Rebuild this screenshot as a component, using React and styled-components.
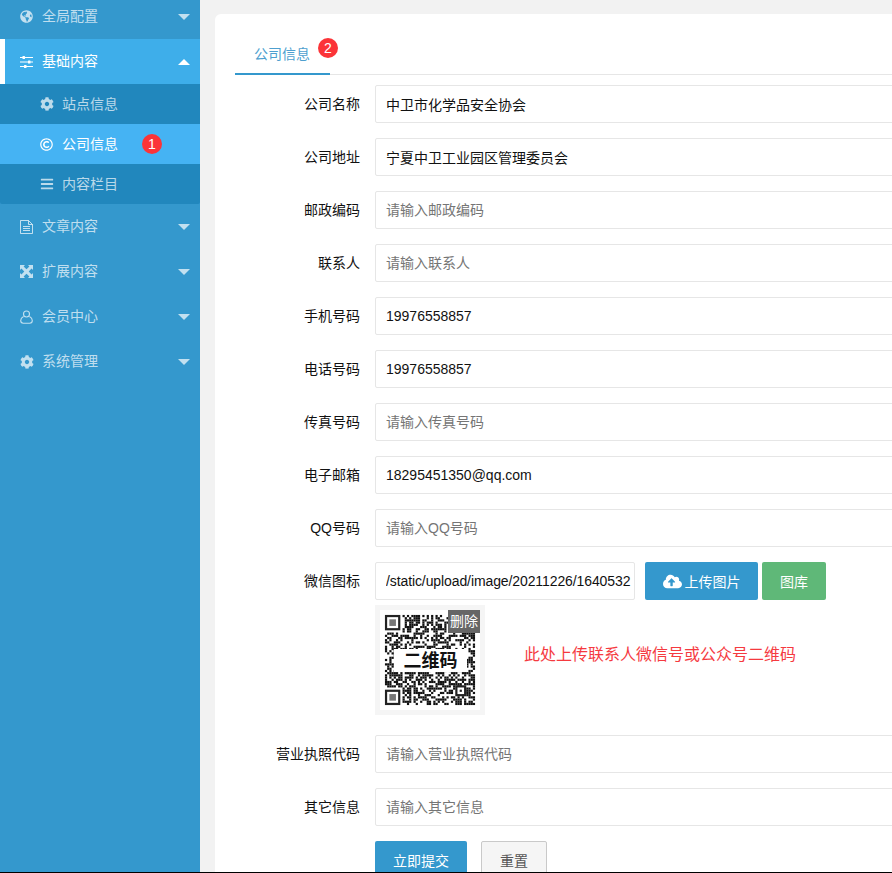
import React from 'react';
import styled, { createGlobalStyle } from 'styled-components';
import { FaGlobeAmericas, FaCog, FaRegCopyright, FaBars, FaCloudUploadAlt } from 'react-icons/fa';

const Global = createGlobalStyle`
  html, body { margin: 0; padding: 0; height: 100%; overflow: hidden; background: #f2f2f2; }
  body { font-family: "Liberation Sans", "Noto Sans CJK SC", sans-serif; font-size: 14px; color: #111; }
  * { box-sizing: border-box; }
`;

const Page = styled.div`
  display: flex;
  height: 873px;
  overflow: hidden;
  border-bottom: 1px solid #000;
`;
const Sidebar = styled.nav`
  flex: 0 0 200px;
  background: #3498cd;
  margin-top: -6px;
  height: 879px;
`;
const NavItem = styled.div`
  height: 45px;
  display: flex;
  align-items: center;
  padding-left: ${p => (p.$active ? 15 : 20)}px;
  border-left: ${p => (p.$active ? '5px solid #fff' : '0')};
  background: ${p => (p.$active ? '#3eaeea' : 'transparent')};
  color: ${p => (p.$active ? '#fff' : 'rgba(255,255,255,.7)')};
  line-height: 45px;
`;
const NavIcon = styled.span`
  width: 22px;
  display: inline-flex;
  align-items: center;
  font-size: ${p => p.$size || 14}px;
  color: inherit;
`;
const Grow = styled.span`flex: 1;`;
const Caret = styled.i`
  width: 0;
  height: 0;
  margin-right: 10px;
  border-left: 6px solid transparent;
  border-right: 6px solid transparent;
  ${p => (p.$up ? 'border-bottom: 6px solid currentColor;' : 'border-top: 6px solid currentColor;')}
`;
const SubList = styled.div`
  background: #2187bd;
  border-radius: 0 0 2px 2px;
`;
const SubItem = styled.div`
  height: 40px;
  display: flex;
  align-items: center;
  padding-left: 40px;
  background: ${p => (p.$active ? '#45b3f3' : 'transparent')};
  color: ${p => (p.$active ? '#fff' : 'rgba(255,255,255,.7)')};
  line-height: 40px;
`;
const Dot = styled.span`
  width: 20px;
  height: 20px;
  border-radius: 50%;
  background: #fb3438;
  color: #fff;
  font-size: 14px;
  line-height: 20px;
  text-align: center;
  display: inline-block;
`;
const SubDot = styled(Dot)`margin-left: 24px;`;
const Main = styled.main`
  flex: 1;
  min-width: 0;
  padding: 14px 0 0 15px;
`;
const Card = styled.section`
  width: 900px;
  height: 900px;
  background: #fff;
  border-radius: 6px 0 0 0;
  padding: 20px 0 0 20px;
`;
const Tabs = styled.div`
  display: flex;
  height: 41px;
  border-bottom: 1px solid #e6e6e6;
  margin-bottom: 10px;
`;
const Tab = styled.div`
  position: relative;
  width: 95px;
  height: 41px;
  padding-left: 19px;
  line-height: 41px;
  color: #4e9fcf;
  border-bottom: 2px solid #3498cd;
`;
const TabDot = styled(Dot)`
  position: absolute;
  left: 83px;
  top: 4px;
`;
const Row = styled.div`
  display: flex;
  align-items: flex-start;
  margin-bottom: 15px;
`;
const Label = styled.label`
  flex: 0 0 125px;
  text-align: right;
  line-height: 38px;
  height: 38px;
  margin-right: 15px;
  color: #111;
`;
const Input = styled.input`
  flex: 0 0 auto;
  width: ${p => p.$w || 560}px;
  height: 38px;
  border: 1px solid #e6e6e6;
  border-radius: 2px;
  padding: 0 10px;
  font: inherit;
  color: #111;
  outline: none;
  background: #fff;
  &::placeholder { color: #757575; opacity: 1; }
`;
const PathInput = styled(Input)`
  padding: 0 0 0 10px;
  letter-spacing: -0.1px;
`;
const Field = styled.div``;
const UploadLine = styled.div`
  display: flex;
  align-items: center;
`;
const Btn = styled.button`
  height: 38px;
  border: 0;
  border-radius: 2px;
  color: #fff;
  font: inherit;
  background: ${p => (p.$green ? '#5fb878' : '#3498cd')};
  padding: 0;
  width: ${p => p.$w}px;
  margin-left: ${p => p.$ml || 0}px;
  display: inline-flex;
  align-items: center;
  justify-content: center;
  gap: 3px;
`;
const ResetBtn = styled(Btn)`
  background: #f5f5f5;
  color: #555;
  border: 1px solid #c9c9c9;
`;
const PreviewRow = styled.div`
  display: flex;
  align-items: center;
  margin-top: 5px;
  margin-bottom: 5px;
`;
const Thumb = styled.div`
  position: relative;
  width: 110px;
  height: 110px;
  padding: 5px;
  background: #f5f5f5;
`;
const Del = styled.span`
  position: absolute;
  top: 5px;
  right: 5px;
  width: 32px;
  height: 23px;
  background: #666;
  color: #fff;
  font-size: 14px;
  line-height: 23px;
  text-align: center;
`;
const QrLabel = styled.span`
  position: absolute;
  left: 19px;
  top: 44px;
  width: 73px;
  height: 23px;
  background: #fff;
  color: #111;
  font-size: 18px;
  font-weight: 700;
  line-height: 24px;
  text-align: center;
`;
const Hint = styled.span`
  margin-left: 39px;
  margin-bottom: 14px;
  font-size: 16px;
  color: #f53a3f;
`;
const QrSvg = styled.svg`
  display: block;
  background: #fff;
  filter: blur(0.35px);
`;

function Finder({ x, y }) {
  return (
    <g>
      <rect x={x} y={y} width="7" height="7" fill="#222" />
      <rect x={x + 1} y={y + 1} width="5" height="5" fill="#fff" />
      <rect x={x + 2} y={y + 2} width="3" height="3" fill="#777" />
    </g>
  );
}

function Qr() {
  const n = 41;
  const cells = [];
  let s = 20211226;
  for (let y = 0; y < n; y++) {
    for (let x = 0; x < n; x++) {
      s = (s * 1103515245 + 12345) & 0x7fffffff;
      const inFinder = (x < 8 && y < 8) || (x < 8 && y >= n - 8) || (x >= n - 8 && y < 8);
      if (!inFinder && (s >> 16) % 100 < 52) cells.push(<rect key={x + '-' + y} x={x} y={y} width="1" height="1" fill="#111" />);
    }
  }
  return (
    <QrSvg width="100" height="100" viewBox="-2.25 -2.25 45.5 45.5">
      {cells}
      <Finder x={0} y={0} />
      <Finder x={0} y={n - 7} />
      <Finder x={n - 7} y={0} />
      <rect x={n - 9} y={n - 9} width="5" height="5" fill="#222" />
      <rect x={n - 8} y={n - 8} width="3" height="3" fill="#fff" />
      <rect x={n - 7} y={n - 7} width="1" height="1" fill="#222" />
    </QrSvg>
  );
}

function UserIcon() {
  return (
    <svg width="13" height="14" viewBox="0 0 13 14" fill="none" stroke="currentColor" strokeWidth="1.1">
      <circle cx="6.5" cy="4" r="3" />
      <path d="M3.5 6.6C1.6 7.6.7 9 .7 10.6c0 1.6 1 2.7 2.6 2.7h6.4c1.6 0 2.6-1.1 2.6-2.7 0-1.6-.9-3-2.8-4" />
    </svg>
  );
}
function SlidersIcon() {
  return (
    <svg width="13" height="12" viewBox="0 0 13 12" fill="currentColor">
      <rect x="0" y="1" width="13" height="1" />
      <rect x="0" y="5.5" width="13" height="1" />
      <rect x="0" y="10" width="13" height="1" />
      <rect x="2.5" y="0" width="2.5" height="3" rx=".5" />
      <rect x="8" y="4.5" width="2.5" height="3" rx=".5" />
      <rect x="4" y="9" width="2.5" height="3" rx=".5" />
    </svg>
  );
}
function FileIcon() {
  return (
    <svg width="13" height="14" viewBox="0 0 13 14" fill="none" stroke="currentColor" strokeWidth="1">
      <path d="M.5.5h8l4 4v9H.5z" />
      <path d="M8.5.5v4h4M3 6.5h7M3 8.5h7M3 10.5h7" />
    </svg>
  );
}
function ExpandIcon() {
  return (
    <svg width="13" height="13" viewBox="0 0 13 13" fill="currentColor">
      <path d="M0 0h5L3.6 1.4 6.5 4.3 9.4 1.4 8 0h5v5l-1.4-1.4-2.9 2.9 2.9 2.9L13 8v5H8l1.4-1.4-2.9-2.9-2.9 2.9L5 13H0V8l1.4 1.4 2.9-2.9-2.9-2.9L0 5z" />
    </svg>
  );
}

const bottom = [
  ['文章内容', <FileIcon />],
  ['扩展内容', <ExpandIcon />],
  ['会员中心', <UserIcon />],
  ['系统管理', <FaCog />],
];
const fieldsA = [
  ['公司名称', '中卫市化学品安全协会', ''],
  ['公司地址', '宁夏中卫工业园区管理委员会', ''],
  ['邮政编码', '', '请输入邮政编码'],
  ['联系人', '', '请输入联系人'],
  ['手机号码', '19976558857', ''],
  ['电话号码', '19976558857', ''],
  ['传真号码', '', '请输入传真号码'],
  ['电子邮箱', '18295451350@qq.com', ''],
  ['QQ号码', '', '请输入QQ号码'],
];
const fieldsB = [
  ['营业执照代码', '请输入营业执照代码'],
  ['其它信息', '请输入其它信息'],
];

export default function App() {
  return (
    <>
      <Global />
      <Page>
        <Sidebar>
          <NavItem><NavIcon $size={13}><FaGlobeAmericas /></NavIcon>全局配置<Grow /><Caret /></NavItem>
          <NavItem $active><NavIcon><SlidersIcon /></NavIcon>基础内容<Grow /><Caret $up /></NavItem>
          <SubList>
            <SubItem><NavIcon><FaCog /></NavIcon>站点信息</SubItem>
            <SubItem $active><NavIcon $size={13}><FaRegCopyright /></NavIcon>公司信息<SubDot>1</SubDot></SubItem>
            <SubItem><NavIcon><FaBars /></NavIcon>内容栏目</SubItem>
          </SubList>
          {bottom.map(([t, i]) => (
            <NavItem key={t}><NavIcon>{i}</NavIcon>{t}<Grow /><Caret /></NavItem>
          ))}
        </Sidebar>
        <Main>
          <Card>
            <Tabs>
              <Tab>公司信息<TabDot>2</TabDot></Tab>
            </Tabs>
            {fieldsA.map(([l, v, p]) => (
              <Row key={l}>
                <Label>{l}</Label>
                <Input defaultValue={v} placeholder={p} />
              </Row>
            ))}
            <Row>
              <Label>微信图标</Label>
              <Field>
                <UploadLine>
                  <PathInput $w={260} defaultValue="/static/upload/image/20211226/1640532" />
                  <Btn $w={113} $ml={10}><FaCloudUploadAlt size={19} />上传图片</Btn>
                  <Btn $w={64} $ml={4} $green>图库</Btn>
                </UploadLine>
                <PreviewRow>
                  <Thumb>
                    <Qr />
                    <QrLabel>二维码</QrLabel>
                    <Del>删除</Del>
                  </Thumb>
                  <Hint>此处上传联系人微信号或公众号二维码</Hint>
                </PreviewRow>
              </Field>
            </Row>
            {fieldsB.map(([l, p]) => (
              <Row key={l}>
                <Label>{l}</Label>
                <Input placeholder={p} />
              </Row>
            ))}
            <Row>
              <Label />
              <Btn $w={92}>立即提交</Btn>
              <ResetBtn $w={66} $ml={14}>重置</ResetBtn>
            </Row>
          </Card>
        </Main>
      </Page>
    </>
  );
}
